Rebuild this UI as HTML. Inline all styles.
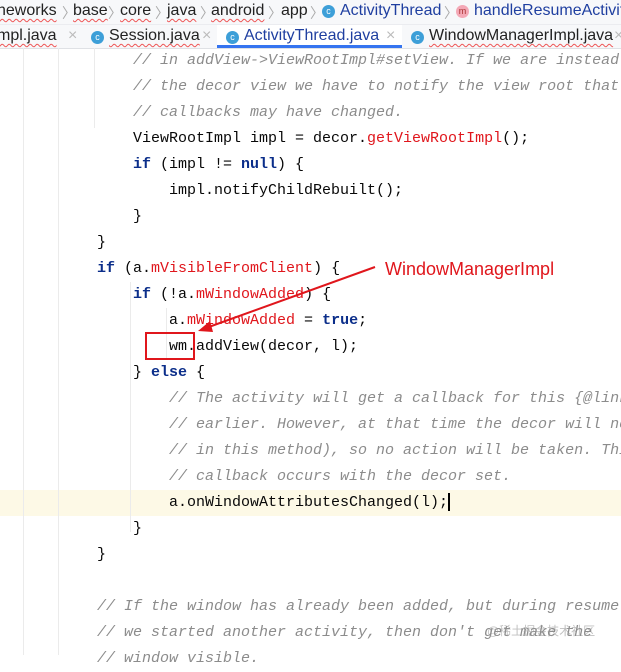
<!DOCTYPE html>
<html><head><meta charset="utf-8"><style>
body{margin:0;width:621px;height:655px;overflow:hidden;background:#fff;position:relative;font-family:"Liberation Sans",sans-serif}
.bc{position:absolute;top:0;left:0;width:621px;height:24px;background:#f7f8fa;border-bottom:1px solid #ebecf0;font-size:16px;color:#222;white-space:nowrap}
.tabs{position:absolute;top:25px;left:0;width:621px;height:23px;background:#f7f8fa;border-bottom:1px solid #dfe1e5;font-size:16px;color:#222;white-space:nowrap}
.s{position:absolute;top:2px}
.sq{text-decoration:underline wavy #e55;text-decoration-thickness:1px;text-underline-offset:3px}
.chev{position:absolute;top:3px;color:#aaa;font-size:14px}
.ic{position:absolute;width:13px;height:13px;border-radius:50%;background:#3d9fd8;color:#fff;font-size:9px;line-height:13px;text-align:center}
.code{position:absolute;left:0;top:48px;width:621px;height:607px}
.l{position:absolute;font-family:"Liberation Mono",monospace;font-size:15px;white-space:pre;color:#080808;line-height:26px}
.c{color:#8c8c8c;font-style:italic}
.k{color:#0b2e8a;font-weight:bold}
.f{color:#e0161c}
.g{position:absolute;top:0;width:1px;height:607px;background:#ebebeb}
</style></head><body>
<div class="bc">
<span class="s sq" style="left:-3px">neworks</span><span class="chev" style="left:62px">〉</span>
<span class="s sq" style="left:73px">base</span><span class="chev" style="left:108px">〉</span>
<span class="s sq" style="left:120px">core</span><span class="chev" style="left:155px">〉</span>
<span class="s sq" style="left:167px">java</span><span class="chev" style="left:200px">〉</span>
<span class="s sq" style="left:211px">android</span><span class="chev" style="left:268px">〉</span>
<span class="s" style="left:281px">app</span><span class="chev" style="left:310px">〉</span>
<span class="ic" style="left:322px;top:5px">c</span>
<span class="s" style="left:340px;color:#1f3fa0">ActivityThread</span><span class="chev" style="left:444px">〉</span>
<span class="ic" style="left:456px;top:5px;background:#f4a8b6;color:#a33">m</span>
<span class="s" style="left:474px;color:#1f3fa0">handleResumeActivit</span>
</div>
<div class="tabs">
<span class="s sq" style="left:-3px">mpl.java</span><span class="s" style="left:68px;color:#bbb">×</span>
<span class="ic" style="left:91px;top:6px">c</span><span class="s sq" style="left:109px">Session.java</span><span class="s" style="left:202px;color:#bbb">×</span>
<div style="position:absolute;left:217px;top:0;width:185px;height:23px;background:#fff;border-bottom:3px solid #3574f0;box-sizing:border-box"></div>
<span class="ic" style="left:226px;top:6px">c</span><span class="s" style="left:244px;color:#1f3fa0">ActivityThread.java</span><span class="s" style="left:386px;color:#bbb">×</span>
<span class="ic" style="left:411px;top:6px">c</span><span class="s sq" style="left:429px">WindowManagerImpl.java</span><span class="s" style="left:614px;color:#bbb">×</span>
</div>
<div class="code">
<div style="position:absolute;left:0;top:442px;width:621px;height:26px;background:#fdf9e6"></div>
<div class="g" style="left:23px"></div><div class="g" style="left:58px"></div>
<div class="g" style="left:94px;height:80px;top:0"></div>
<div class="g" style="left:130px;top:234px;height:250px"></div>
<div class="g" style="left:166px;top:260px;height:52px"></div>
<div class="l c" style="left:133px;top:0">// in addView-&gt;ViewRootImpl#setView. If we are instead</div>
<div class="l c" style="left:133px;top:26px">// the decor view we have to notify the view root that</div>
<div class="l c" style="left:133px;top:52px">// callbacks may have changed.</div>
<div class="l" style="left:133px;top:78px">ViewRootImpl impl = decor.<span class="f">getViewRootImpl</span>();</div>
<div class="l" style="left:133px;top:104px"><span class="k">if</span> (impl != <span class="k">null</span>) {</div>
<div class="l" style="left:169px;top:130px">impl.notifyChildRebuilt();</div>
<div class="l" style="left:133px;top:156px">}</div>
<div class="l" style="left:97px;top:182px">}</div>
<div class="l" style="left:97px;top:208px"><span class="k">if</span> (a.<span class="f">mVisibleFromClient</span>) {</div>
<div class="l" style="left:133px;top:234px"><span class="k">if</span> (!a.<span class="f">mWindowAdded</span>) {</div>
<div class="l" style="left:169px;top:260px">a.<span class="f">mWindowAdded</span> = <span class="k">true</span>;</div>
<div class="l" style="left:169px;top:286px">wm.addView(decor, l);</div>
<div class="l" style="left:133px;top:312px">} <span class="k">else</span> {</div>
<div class="l c" style="left:169px;top:338px">// The activity will get a callback for this {@link</div>
<div class="l c" style="left:169px;top:364px">// earlier. However, at that time the decor will not</div>
<div class="l c" style="left:169px;top:390px">// in this method), so no action will be taken. This</div>
<div class="l c" style="left:169px;top:416px">// callback occurs with the decor set.</div>
<div class="l" style="left:169px;top:442px">a.onWindowAttributesChanged(l);<span style="display:inline-block;width:1.5px;height:18px;background:#000;vertical-align:middle"></span></div>
<div class="l" style="left:133px;top:468px">}</div>
<div class="l" style="left:97px;top:494px">}</div>
<div class="l c" style="left:97px;top:546px">// If the window has already been added, but during resume</div>
<div class="l c" style="left:97px;top:572px">// we started another activity, then don't get make the</div>
<div class="l c" style="left:97px;top:598px">// window visible.</div>
</div>
<div style="position:absolute;left:145px;top:332px;width:50px;height:28px;border:2px solid #e0161c;box-sizing:border-box"></div>
<svg style="position:absolute;left:0;top:0" width="621" height="655"><line x1="375" y1="267" x2="206" y2="328" stroke="#e0161c" stroke-width="2"/><polygon points="198,331 210,321 213,332" fill="#e0161c"/></svg>
<div style="position:absolute;left:385px;top:259px;font-size:18px;color:#e0161c">WindowManagerImpl</div>
<div style="position:absolute;left:487px;top:622px;font-size:12px;color:rgba(150,150,150,0.6);font-family:'Liberation Sans','Noto Sans CJK SC',sans-serif">@稀土掘金技术社区</div>
</body></html>
